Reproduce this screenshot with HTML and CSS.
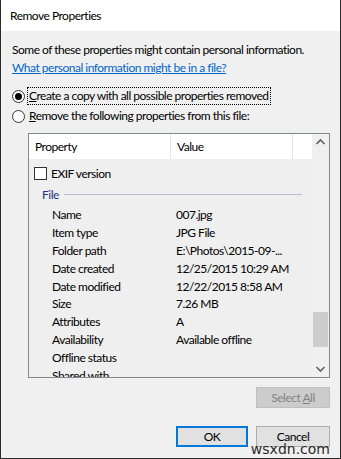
FILE: index.html
```html
<!DOCTYPE html>
<html lang="en">
  <head>
    <meta charset="UTF-8" />
    <title>Remove Properties</title>
    <link rel="stylesheet" href="styles.css">
  </head>
  <body>
    <div class="dialog">
      <div class="titlebar">Remove Properties</div>

      <div class="dialog-body">
        <p class="intro">Some of these properties might contain personal information.</p>
        <a class="info-link" href="#">What personal information might be in a file?</a>

        <div class="options">
          <label class="radio-row">
            <span class="radio checked"></span>
            <span class="radio-text focused"><u>C</u>reate a copy with all possible properties removed</span>
          </label>
          <label class="radio-row">
            <span class="radio"></span>
            <span class="radio-text"><u>R</u>emove the following properties from this file:</span>
          </label>
        </div>

        <div class="prop-list">
          <div class="list-main">
            <div class="list-header">
              <div class="col col-prop">Property</div>
              <div class="col col-val">Value</div>
              <div class="col col-rest"></div>
            </div>
            <div class="list-rows">
              <div class="list-scroll">
                <div class="row check-row row-cut"><span class="checkbox"></span>Digital zoom</div>
                <div class="row check-row"><span class="checkbox"></span>EXIF version</div>
                <div class="group">
                  <span class="group-name">File</span>
                  <span class="group-line"></span>
                </div>
                <div class="row"><span class="name">Name</span><span class="value">007.jpg</span></div>
                <div class="row"><span class="name">Item type</span><span class="value">JPG File</span></div>
                <div class="row"><span class="name">Folder path</span><span class="value">E:\Photos\2015-09-...</span></div>
                <div class="row"><span class="name">Date created</span><span class="value">12/25/2015 10:29 AM</span></div>
                <div class="row"><span class="name">Date modified</span><span class="value">12/22/2015 8:58 AM</span></div>
                <div class="row"><span class="name">Size</span><span class="value">7.26 MB</span></div>
                <div class="row"><span class="name">Attributes</span><span class="value">A</span></div>
                <div class="row"><span class="name">Availability</span><span class="value">Available offline</span></div>
                <div class="row"><span class="name">Offline status</span><span class="value"></span></div>
                <div class="row"><span class="name">Shared with</span><span class="value"></span></div>
              </div>
            </div>
          </div>
          <div class="scrollbar">
            <svg class="arrow" width="17" height="17" viewBox="0 0 17 17">
              <path d="M4.5 10 L8.5 6 L12.5 10" fill="none" stroke="#606060" stroke-width="1.6" />
            </svg>
            <div class="track"><div class="thumb"></div></div>
            <svg class="arrow" width="17" height="17" viewBox="0 0 17 17">
              <path d="M4.5 7 L8.5 11 L12.5 7" fill="none" stroke="#606060" stroke-width="1.6" />
            </svg>
          </div>
        </div>

        <div class="select-row">
          <button class="btn" disabled>Select <u>A</u>ll</button>
        </div>

        <div class="dialog-buttons">
          <button class="btn btn-ok">OK</button>
          <button class="btn">Cancel</button>
        </div>
      </div>

      <div class="watermark">wsxdn.com</div>
    </div>
  </body>
</html>
```

FILE: styles.css
```css
body {
  margin: 0;
  font-family: "Segoe UI", Lato, sans-serif;
  font-size: 12px;
  letter-spacing: -0.5px;
  color: #000;
  background-color: #f0f0f0;
}

.dialog {
  position: relative;
  width: 341px;
  height: 459px;
  box-sizing: border-box;
  border: 1px solid #2b2b2b;
  border-top: none;
  background-color: #f0f0f0;
  overflow: hidden;
}

.titlebar {
  height: 31px;
  line-height: 31px;
  padding-left: 9px;
  background-color: #fff;
}

.dialog-body {
  padding: 10px 10px 0 11px;
}

.intro {
  margin: 0;
  line-height: 18px;
  white-space: nowrap;
}

.info-link {
  display: block;
  line-height: 18px;
  color: #0066cc;
}

.options {
  margin-top: 10px;
  display: flex;
  flex-direction: column;
  gap: 2px;
}

.radio-row {
  display: flex;
  align-items: center;
  height: 18px;
}

.radio {
  width: 11px;
  height: 11px;
  border: 1px solid #333;
  border-radius: 50%;
  background-color: #fff;
  display: flex;
  align-items: center;
  justify-content: center;
  margin-right: 2px;
}

.radio.checked::after {
  content: "";
  width: 7px;
  height: 7px;
  border-radius: 50%;
  background-color: #000;
}

.radio-text {
  padding: 0 1px;
  line-height: 16px;
  border: 1px dotted transparent;
}

.radio-text.focused {
  border-color: #000;
}

/* property list */
.prop-list {
  margin: 8px 0 0 16px;
  width: 302px;
  height: 245px;
  box-sizing: border-box;
  border: 1px solid #828790;
  display: flex;
}

.list-main {
  flex: 1;
  display: flex;
  flex-direction: column;
  min-width: 0;
}

.list-header {
  height: 25px;
  flex-shrink: 0;
  display: flex;
  background-color: #fff;
}

.col {
  line-height: 25px;
  padding-left: 6px;
  border-right: 1px solid #e5e5e5;
  box-sizing: border-box;
}

.col-prop {
  width: 142px;
}

.col-val {
  width: 122px;
}

.col-rest {
  flex: 1;
  border-right: none;
}

.list-rows {
  flex: 1;
  overflow: hidden;
  background-color: #efefef;
}

.list-scroll {
  margin-top: -17px;
}

.row {
  display: flex;
  align-items: center;
  height: 17.8px;
  white-space: nowrap;
}

.check-row {
  height: 18px;
  padding-left: 5px;
}

.row-cut {
  margin-bottom: 4px;
}

.checkbox {
  width: 11px;
  height: 11px;
  border: 1px solid #333;
  background-color: #fff;
  margin-right: 4px;
}

.name {
  width: 124px;
  padding-left: 23px;
}

.value {
  flex: 1;
}

.group {
  height: 24px;
  display: flex;
  align-items: center;
  padding-left: 13px;
}

.group-name {
  color: #1e3287;
}

.group-line {
  width: 238px;
  height: 1px;
  margin-left: 5px;
  background-color: #b4bcd6;
}

.scrollbar {
  width: 17px;
  display: flex;
  flex-direction: column;
  background-color: #f0f0f0;
}

.arrow {
  display: block;
}

.track {
  flex: 1;
  position: relative;
}

.thumb {
  position: absolute;
  left: 1px;
  right: 1px;
  top: 161px;
  height: 35px;
  background-color: #cdcdcd;
}

/* buttons */
.btn {
  height: 21px;
  width: 74px;
  padding: 0;
  font-family: inherit;
  font-size: 12px;
  letter-spacing: -0.5px;
  color: #000;
  background-color: #e1e1e1;
  border: 1px solid #adadad;
}

.btn:disabled {
  color: #838383;
  background-color: #cccccc;
  border-color: #bfbfbf;
}

.select-row {
  display: flex;
  justify-content: flex-end;
  margin-top: 9px;
}

.dialog-buttons {
  display: flex;
  justify-content: flex-end;
  gap: 8px;
  margin-top: 18px;
}

.btn-ok {
  width: 72px;
  border: 2px solid #0078d7;
}

.watermark {
  position: absolute;
  right: 10px;
  bottom: 1px;
  font-family: "DejaVu Sans", sans-serif;
  font-size: 14px;
  letter-spacing: 0;
  color: #2b2b2b;
}
```
